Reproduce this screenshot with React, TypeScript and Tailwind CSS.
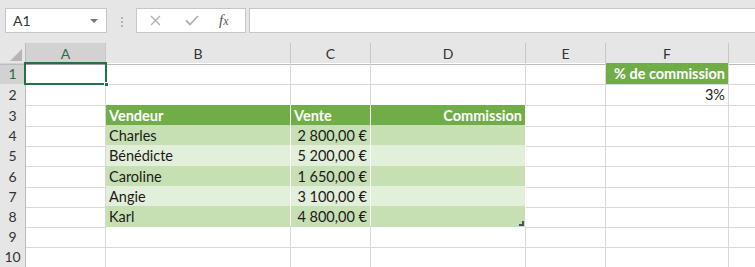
import React from 'react';

type Cell = {
  text?: string;
  bg?: string;
  align?: 'left' | 'right';
  bold?: boolean;
  white?: boolean;
  table?: boolean;
};

const cols = ['A', 'B', 'C', 'D', 'E', 'F', ''];
const rowHeights = ['h-[21px]', 'h-[21px]', 'h-[20px]', 'h-[20px]', 'h-[21px]', 'h-[20px]', 'h-[20px]', 'h-[20px]', 'h-[20px]', 'h-[20px]'];

const dark = 'bg-[#c6e0b4]';
const light = 'bg-[#e2efda]';
const head = 'bg-[#70ad47]';

const sellers = [
  ['Charles', '2 800,00 €', dark],
  ['Bénédicte', '5 200,00 €', light],
  ['Caroline', '1 650,00 €', dark],
  ['Angie', '3 100,00 €', light],
  ['Karl', '4 800,00 €', dark],
];

// 10 rows x 7 columns (A..G)
const buildRows = (): Cell[][] => {
  const rows: Cell[][] = [];
  for (let r = 0; r < 10; r++) rows.push(Array.from({ length: 7 }, () => ({})));
  rows[0][5] = { text: '% de commission', bg: head, align: 'right', bold: true, white: true };
  rows[1][5] = { text: '3%', align: 'right' };
  rows[2][1] = { text: 'Vendeur', bg: head, bold: true, white: true, table: true };
  rows[2][2] = { text: 'Vente', bg: head, bold: true, white: true, table: true };
  rows[2][3] = { text: 'Commission', bg: head, bold: true, white: true, align: 'right', table: true };
  sellers.forEach(([name, amount, bg], i) => {
    rows[3 + i][1] = { text: name, bg, table: true };
    rows[3 + i][2] = { text: amount, bg, align: 'right', table: true };
    rows[3 + i][3] = { text: '', bg, table: true };
  });
  return rows;
};

const gridCols = 'grid grid-cols-[26px_80px_185px_80px_155px_80px_123px_1fr]';

export default function App() {
  const rows = buildRows();

  return (
    <div className="w-[755px] h-[267px] overflow-hidden bg-white font-['Lato',sans-serif] text-[14.5px] text-[#1a1a1a] relative">
      {/* formula bar */}
      <div className="h-[43px] bg-[#e6e6e6] flex items-start pt-[8px]">
        <div className="ml-[5px] w-[102px] h-[25px] bg-white border border-[#c6c6c6] flex items-center pl-[7px] pr-[8px]">
          <span className="text-[14px] text-[#333]">A1</span>
          <span className="ml-auto w-0 h-0 border-l-[4px] border-r-[4px] border-t-[4px] border-l-transparent border-r-transparent border-t-[#777]" />
        </div>
        <div className="ml-[14px] mt-[9px] flex flex-col gap-[2px]">
          <span className="w-[2px] h-[2px] bg-[#b3b3b3]" />
          <span className="w-[2px] h-[2px] bg-[#b3b3b3]" />
          <span className="w-[2px] h-[2px] bg-[#b3b3b3]" />
        </div>
        <div className="ml-[13px] w-[110px] h-[25px] bg-white border border-[#c6c6c6] flex items-center">
          <svg className="ml-[13px]" width="11" height="11" viewBox="0 0 11 11">
            <path d="M1 1 L10 10 M10 1 L1 10" stroke="#b0b0b0" strokeWidth="1.3" fill="none" />
          </svg>
          <svg className="ml-[24px]" width="14" height="11" viewBox="0 0 14 11">
            <path d="M1 5.5 L5 9.5 L13 1" stroke="#b0b0b0" strokeWidth="1.8" fill="none" />
          </svg>
          <span className="ml-[20px] font-['Liberation_Serif',serif] italic text-[15px] text-[#555] leading-none">
            f<span className="text-[12px]">x</span>
          </span>
        </div>
        <div className="ml-[3px] flex-1 h-[25px] bg-white border border-[#c6c6c6] border-r-0" />
      </div>

      {/* column headers */}
      <div className={`${gridCols} h-[20px] bg-[#e6e6e6]`}>
        <div className="relative border-r border-b border-[#bcbcbc]">
          <svg className="absolute right-[3px] bottom-[3px]" width="12" height="12" viewBox="0 0 12 12">
            <path d="M12 0 L12 12 L0 12 Z" fill="#b5b5b5" />
          </svg>
        </div>
        {cols.map((c, i) => (
          <div
            key={i}
            className={`flex items-center justify-center border-b text-[14px] ${
              i === 0 ? 'bg-[#d2d2d2] text-[#217346] border-b-[#9e9e9e]' : 'text-[#333] border-b-[#bcbcbc]'
            } ${i < 6 ? 'border-r border-r-[#c8c8c8]' : ''}`}
          >
            {c}
          </div>
        ))}
      </div>

      {/* rows */}
      {rows.map((row, r) => (
        <div key={r} className={`${gridCols} ${rowHeights[r]}`}>
          <div
            className={`flex items-center justify-center border-r border-b border-[#bcbcbc] text-[14px] ${
              r === 0 ? 'bg-[#d2d2d2] text-[#217346]' : 'bg-[#e6e6e6] text-[#333]'
            }`}
          >
            {r + 1}
          </div>
          {row.map((cell, c) => (
            <div
              key={c}
              className={`flex items-center px-[3px] whitespace-nowrap overflow-hidden ${cell.bg ?? ''} ${
                c < 6 ? 'border-r' : ''
              } border-b ${cell.table ? 'border-white' : 'border-[#d9d9d9]'} ${
                cell.align === 'right' ? 'justify-end' : ''
              } ${cell.bold ? 'font-bold' : ''} ${cell.white ? 'text-white' : ''}`}
            >
              {cell.text}
            </div>
          ))}
        </div>
      ))}

      {/* selected cell A1 */}
      <div className="absolute left-[24px] top-[62px] w-[83px] h-[23px] border-2 border-[#217346]" />
      <div className="absolute left-[104px] top-[82px] w-[5px] h-[5px] bg-[#217346] border border-white" />
      {/* table resize handle */}
      <svg className="absolute left-[519px] top-[221px]" width="5" height="5" viewBox="0 0 5 5">
        <path d="M5 0 L5 5 L0 5 L0 3 L3 3 L3 0 Z" fill="#44546a" />
      </svg>
    </div>
  );
}
